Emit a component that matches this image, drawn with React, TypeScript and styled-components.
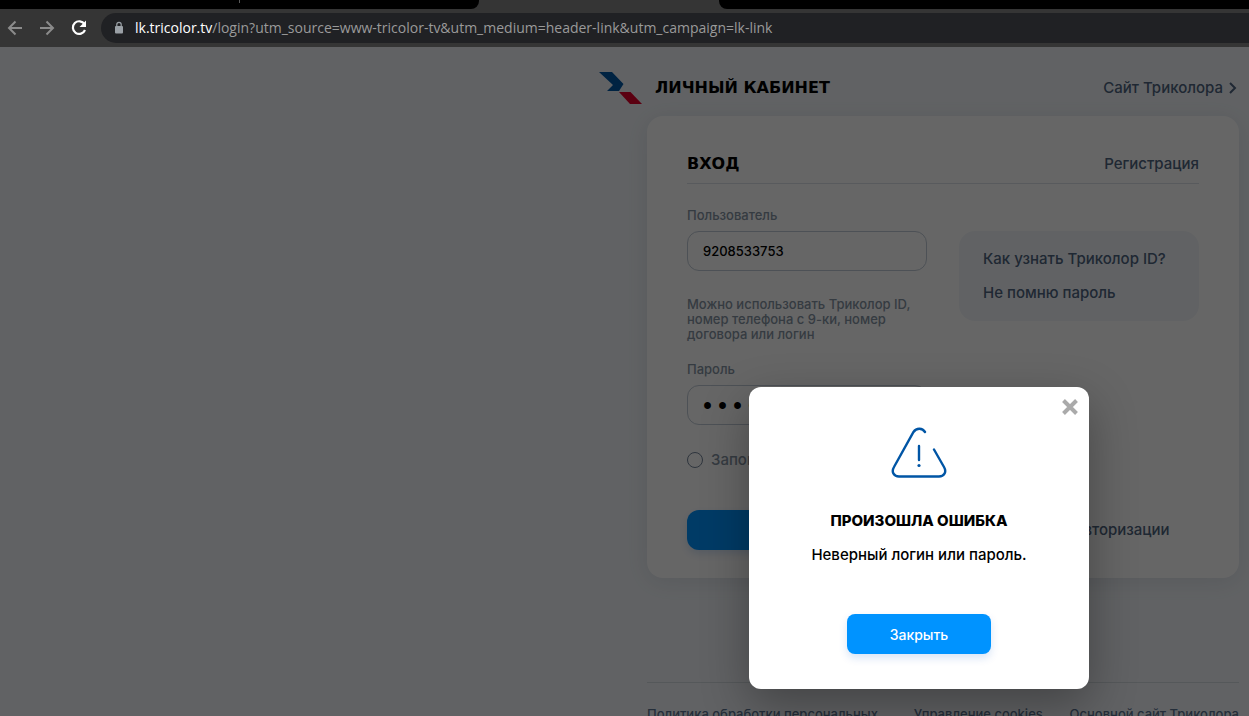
import React from "react";
import styled, { createGlobalStyle } from "styled-components";

const Global = createGlobalStyle`
  *, *::before, *::after { box-sizing: border-box; }
  body { margin: 0; background: #616264; }
  body, button, input { font-family: Inter, "Open Sans", sans-serif; font-weight: 500; }
  h1, h2, p { margin: 0; }
  a { text-decoration: none; }
`;

const Shell = styled.div`
  display: flex;
  flex-direction: column;
  height: 100vh;
  overflow: hidden;
`;

const TabStrip = styled.div`
  display: flex;
  height: 9px;
  flex-shrink: 0;
  background: #353535;
`;

const Tabs = styled.div<{ $grow?: boolean; $round: string }>`
  width: ${(p) => (p.$grow ? "auto" : "479px")};
  flex: ${(p) => (p.$grow ? "1" : "none")};
  background: #000;
  border-radius: ${(p) => p.$round};
  display: flex;
  justify-content: center;
`;

const TabDivider = styled.span`
  width: 1px;
  height: 3px;
  background: #5a5a5a;
`;

const ActiveTab = styled.div`
  width: 240px;
`;

const Toolbar = styled.div`
  display: flex;
  align-items: center;
  flex-shrink: 0;
  height: 38px;
  padding-left: 5px;
  background: #353535;
`;

const ToolButton = styled.button`
  width: 32px;
  height: 30px;
  padding: 0 0 0 1px;
  border: 0;
  background: none;
  text-align: left;
  line-height: 0;
`;

const Address = styled.div`
  flex: 1;
  display: flex;
  align-items: center;
  gap: 10px;
  height: 30px;
  padding-left: 13px;
  background: #202124;
  border-radius: 15px 0 0 15px;
  font: 400 14px/20px "Open Sans", sans-serif;
  color: #9a9a9a;
  white-space: nowrap;

  b { font-weight: 400; color: #fff; }
`;

const Viewport = styled.div`
  position: relative;
  flex: 1;
  overflow: hidden;
  background: #f3f6fa;
`;

const Column = styled.div`
  width: 592px;
  margin: 0 10px 0 auto;
`;

const Header = styled.header`
  display: flex;
  align-items: center;
  height: 69px;
  padding-top: 13px;
  margin-left: -48px;
`;

const Brand = styled.h1`
  flex: 1;
  margin-left: 12px;
  font-family: "DejaVu Sans", sans-serif;
  font-size: 16px;
  line-height: 24px;
  font-weight: 700;
  color: #000;
`;

const Link = styled.a`
  display: inline-flex;
  align-items: center;
  gap: 6px;
  font-size: 15px;
  line-height: 20px;
  color: #4f6480;
  white-space: nowrap;
`;

const Card = styled.main`
  padding: 36px 40px 28px;
  background: #fff;
  border-radius: 16px;
  box-shadow: 0 4px 24px rgba(60, 80, 110, 0.12);
`;

const CardHead = styled.div`
  display: flex;
  align-items: center;
  justify-content: space-between;
  padding-bottom: 7px;
  border-bottom: 1px solid #dbe1e8;
`;

const Title = styled.h2`
  font-family: "DejaVu Sans", sans-serif;
  font-size: 16px;
  line-height: 24px;
  font-weight: 700;
`;

const Form = styled.form`
  display: grid;
  grid-template-columns: 240px 240px;
  column-gap: 32px;
  padding-top: 24px;
`;

const Field = styled.div`
  display: flex;
  flex-direction: column;
  gap: 8px;
`;

const Label = styled.label`
  font-size: 13px;
  line-height: 15px;
  color: #8593a3;
`;

const Input = styled.input`
  height: 40px;
  padding: 0 15px;
  border: 1px solid #c0cad6;
  border-radius: 12px;
  background: #fff;
  font-size: 13px;
  color: #000;
  outline: 0;

  &[type="password"] {
    padding: 4px 12px 0;
    font-family: "Liberation Mono", monospace;
    font-size: 25px;
  }
`;

const Hint = styled.p`
  margin: 26px 0 20px;
  font-size: 13px;
  line-height: 15px;
  color: #8593a3;
`;

const HelpBox = styled.aside`
  display: flex;
  flex-direction: column;
  align-items: flex-start;
  gap: 14px;
  align-self: start;
  margin-top: 23px;
  padding: 18px 24px;
  background: #f3f6fa;
  border-radius: 16px;
`;

const Remember = styled.label`
  display: flex;
  align-items: center;
  gap: 8px;
  margin: 25px 0 40px;
  font-size: 15px;
  line-height: 20px;
  color: #8593a3;
`;

const Round = styled.input`
  appearance: none;
  width: 16px;
  height: 16px;
  margin: 0;
  border: 1px solid #75859a;
  border-radius: 50%;
`;

const Primary = styled.button<{ $radius: number }>`
  min-width: 144px;
  height: 40px;
  padding: 0 24px;
  border: 0;
  border-radius: ${(p) => p.$radius}px;
  background: #0093ff;
  box-shadow: 0 4px 8px rgba(0, 90, 200, 0.16);
  font-size: 14px;
  color: #fff;
`;

const Footer = styled.footer`
  display: flex;
  justify-content: space-between;
  align-items: flex-start;
  margin-top: 104px;
  padding-top: 24px;
  border-top: 1px solid #d5dbe2;
`;

const FooterLink = styled.a`
  max-width: 240px;
  font-size: 13px;
  line-height: 15px;
  color: #5b7391;
`;

const Overlay = styled.div`
  position: absolute;
  inset: 0;
  display: flex;
  justify-content: flex-end;
  align-items: flex-start;
  padding: 340px 160px 0 0;
  background: rgba(0, 0, 0, 0.6);
`;

const Dialog = styled.section`
  position: relative;
  display: flex;
  flex-direction: column;
  align-items: center;
  width: 340px;
  padding: 40px 24px 35px;
  background: #fff;
  border-radius: 12px;
  box-shadow: 0 16px 48px rgba(0, 0, 0, 0.32);
`;

const Close = styled.button`
  position: absolute;
  top: 12px;
  right: 11px;
  padding: 0;
  border: 0;
  background: none;
  line-height: 0;
`;

const DialogTitle = styled.h2`
  margin-top: 32px;
  font-size: 15px;
  line-height: 20px;
  font-weight: 800;
`;

const DialogText = styled.p`
  margin: 14px 0 49px;
  font-size: 15px;
  line-height: 20px;
`;

export default function App() {
  return (
    <Shell>
      <Global />
      <TabStrip>
        <Tabs $round="0 0 8px 0"><TabDivider /></Tabs>
        <ActiveTab />
        <Tabs $grow $round="0 0 0 8px" />
      </TabStrip>
      <Toolbar>
        <ToolButton aria-label="Назад">
          <svg width="18" height="18" viewBox="0 0 18 18" fill="none" stroke="#8b8b8b" strokeWidth="2"><path d="M16 9H3M9.500 2.500 3 9l6.500 6.500" /></svg>
        </ToolButton>
        <ToolButton aria-label="Вперёд">
          <svg width="18" height="18" viewBox="0 0 18 18" fill="none" stroke="#8b8b8b" strokeWidth="2"><path d="M2 9h13M8.500 2.500 15 9l-6.500 6.500" /></svg>
        </ToolButton>
        <ToolButton aria-label="Обновить">
          <svg width="18" height="18" viewBox="0 0 18 18"><path d="M14.500 5.200A6.300 6.300 0 1 0 15 11" fill="none" stroke="#fff" strokeWidth="2.200" /><path d="M16 1.500V8H9.500z" fill="#fff" /></svg>
        </ToolButton>
        <Address>
          <svg width="11" height="14" viewBox="0 0 11 14"><rect x="1" y="5" width="8" height="7.500" rx="1" fill="#9aa0a6" /><path d="M2.800 5.500V3.500a2.200 2.200 0 0 1 4.400 0v2" fill="none" stroke="#9aa0a6" strokeWidth="1.200" /></svg>
          <span><b>lk.tricolor.tv</b>/login?utm_source=www-tricolor-tv&amp;utm_medium=header-link&amp;utm_campaign=lk-link</span>
        </Address>
      </Toolbar>
      <Viewport>
        <Column>
          <Header>
            <svg width="44" height="33" viewBox="0 0 44 33">
              <path d="M0 0h13l11.500 12-4.500 7H8l6-6z" fill="#0057a6" />
              <path d="M20 20h11.500L43 32H31z" fill="#e4002b" />
            </svg>
            <Brand>ЛИЧНЫЙ КАБИНЕТ</Brand>
            <Link href="#site">
              Сайт Триколора
              <svg width="10" height="12" viewBox="0 0 10 12" fill="none" stroke="#4f6480" strokeWidth="2"><path d="M1 1l5 5-5 5" /></svg>
            </Link>
          </Header>
          <Card>
            <CardHead>
              <Title>ВХОД</Title>
              <Link href="#register">Регистрация</Link>
            </CardHead>
            <Form>
              <div>
                <Field>
                  <Label htmlFor="user">Пользователь</Label>
                  <Input id="user" defaultValue="9208533753" />
                </Field>
                <Hint>Можно использовать Триколор ID, номер телефона с 9-ки, номер договора или логин</Hint>
                <Field>
                  <Label htmlFor="password">Пароль</Label>
                  <Input id="password" type="password" defaultValue="12345678" />
                </Field>
                <Remember><Round type="checkbox" />Запомнить меня</Remember>
              </div>
              <HelpBox>
                <Link href="#id">Как узнать Триколор ID?</Link>
                <Link href="#forgot">Не помню пароль</Link>
              </HelpBox>
              <Primary type="button" $radius={12}>Войти</Primary>
              <Link href="#other">Другой способ авторизации</Link>
            </Form>
          </Card>
          <Footer>
            <FooterLink href="#policy">Политика обработки персональных данных</FooterLink>
            <FooterLink href="#cookies">Управление cookies</FooterLink>
            <FooterLink href="#main">Основной сайт Триколора</FooterLink>
          </Footer>
        </Column>
        <Overlay>
          <Dialog role="dialog" aria-labelledby="error-title">
            <Close aria-label="Закрыть окно">
              <svg width="16" height="16" viewBox="0 0 16 16" stroke="#aaa" strokeWidth="4"><path d="M1.500 1.500l13 13M14.500 1.500l-13 13" /></svg>
            </Close>
            <svg width="56" height="52" viewBox="0 0 56 52" fill="none" stroke="#0055a5" strokeWidth="2.400" strokeLinecap="round">
              <path d="M34 5C31.500 1 25.500 0.500 22.500 5L3 40c-3 5 0 9.500 5 9.500h40c5 0 8-4.500 5-9.500L43 22.500M28 19v14" />
              <circle cx="28" cy="38.500" r="1.600" fill="#0055a5" stroke="none" />
            </svg>
            <DialogTitle id="error-title">ПРОИЗОШЛА ОШИБКА</DialogTitle>
            <DialogText>Неверный логин или пароль.</DialogText>
            <Primary $radius={8}>Закрыть</Primary>
          </Dialog>
        </Overlay>
      </Viewport>
    </Shell>
  );
}
